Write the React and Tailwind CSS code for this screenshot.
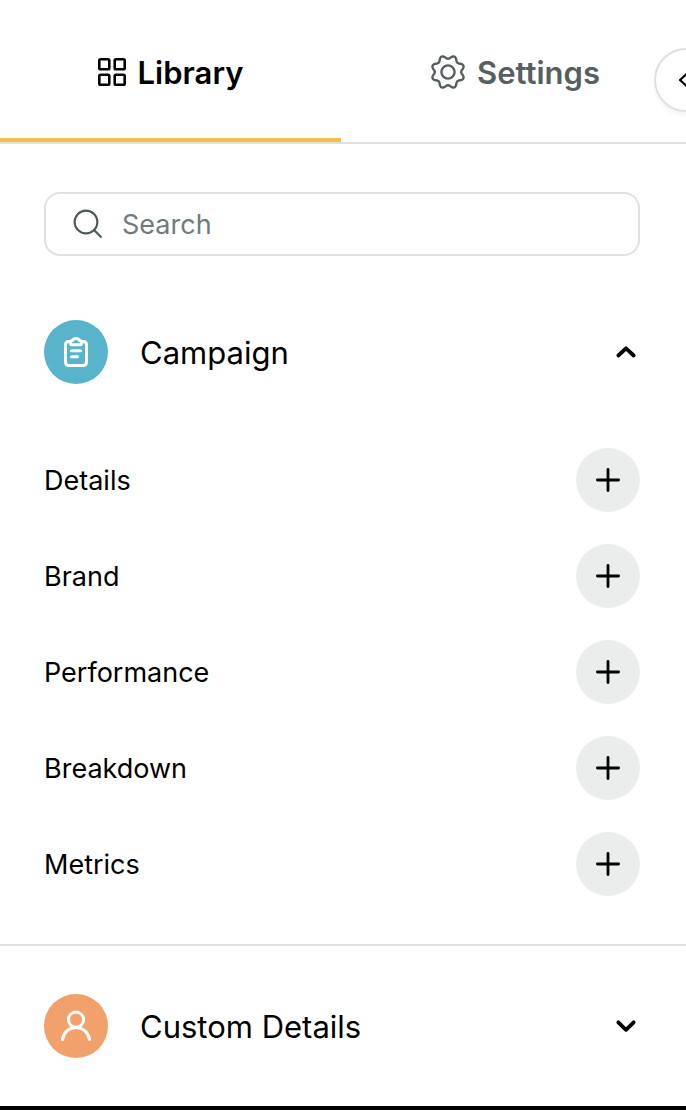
import React, { useState } from 'react';

// eight soft teeth around the centre of a 34x34 box
const gearOutline = Array.from({ length: 96 }, (_, i) => {
    const angle = (i / 96) * Math.PI * 2;
    const r = 14.9 - 1.8 * Math.cos(8 * angle);
    return `${(17 + r * Math.cos(angle)).toFixed(2)},${(17 + r * Math.sin(angle)).toFixed(2)}`;
}).join(' ');

const GridIcon = () => (
    <svg className="size-7" viewBox="0 0 28 28" fill="none" stroke="currentColor" strokeWidth="2.6" aria-hidden="true">
        <rect x="1.3" y="1.3" width="10" height="10" rx="1.3" />
        <rect x="16.7" y="1.3" width="10" height="10" rx="1.3" />
        <rect x="1.3" y="16.7" width="10" height="10" rx="1.3" />
        <rect x="16.7" y="16.7" width="10" height="10" rx="1.3" />
    </svg>
);

const GearIcon = () => (
    <svg className="size-[34px]" viewBox="0 0 34 34" fill="none" stroke="currentColor" strokeWidth="2.4" strokeLinejoin="round" aria-hidden="true">
        <circle cx="17" cy="17" r="6.6" />
        <polygon points={gearOutline} />
    </svg>
);

const SearchIcon = () => (
    <svg className="size-8 shrink-0 text-[#4d5859]" viewBox="0 0 32 32" fill="none" stroke="currentColor" strokeWidth="2.1" aria-hidden="true">
        <circle cx="14" cy="14" r="11.4" />
        <path d="M22 22L29.5 29.5" />
    </svg>
);

const ClipboardIcon = () => (
    <svg className="size-8" viewBox="0 0 32 32" fill="none" stroke="currentColor" strokeWidth="3" strokeLinecap="round" strokeLinejoin="round" aria-hidden="true">
        <path d="M10.5 5.5H9Q5.5 5.5 5.5 9V26Q5.5 29.5 9 29.5H23Q26.5 29.5 26.5 26V9Q26.5 5.5 23 5.5H21.5" />
        <path d="M10.5 7.5V6.5Q10.5 4.5 12.5 4.5Q13.5 2.5 16 2.5T19.5 4.5Q21.5 4.5 21.5 6.5V7.5Q21.5 8.8 20 8.8H12Q10.5 8.8 10.5 7.5Z" />
        <path d="M11.5 14.8H20.5M11.5 20.8H17.5" />
    </svg>
);

const PersonIcon = () => (
    <svg className="size-8" viewBox="0 0 32 32" fill="none" stroke="currentColor" strokeWidth="3" strokeLinecap="round" aria-hidden="true">
        <circle cx="16" cy="9.6" r="7.6" />
        <path d="M2.5 29.5C3.5 22.5 9 17.4 16 17.4S28.5 22.5 29.5 29.5" />
    </svg>
);

const PlusIcon = () => (
    <svg className="size-6" viewBox="0 0 24 24" fill="none" stroke="currentColor" strokeWidth="2.8" strokeLinecap="round" aria-hidden="true">
        <path d="M12 1.4V22.6M1.4 12H22.6" />
    </svg>
);

const Chevron = ({ open }) => (
    <svg className="w-7 h-5" viewBox="0 0 28 20" fill="none" stroke="currentColor" strokeWidth="3.8" strokeLinecap="round" strokeLinejoin="round" aria-hidden="true">
        <path d={open ? 'M6.3 13.5L14 6.3L21.7 13.5' : 'M6.3 6.3L14 13.8L21.7 6.3'} />
    </svg>
);

const sections = [
    {
        title: 'Campaign',
        color: 'bg-[#57b4cb]',
        Icon: ClipboardIcon,
        items: ['Details', 'Brand', 'Performance', 'Breakdown', 'Metrics'],
    },
    { title: 'Custom Details', color: 'bg-[#f2a16c]', Icon: PersonIcon, items: [] },
];

const Section = ({ title, color, Icon, items, open, onToggle }) => (
    <section className="border-b-2 border-[#dfe0e0] pl-11 pr-[46px] py-12 last:border-b-4 last:border-black">
        <button type="button" onClick={onToggle} aria-expanded={open} className="flex w-full items-center gap-8 text-left">
            <span className={`flex size-16 shrink-0 items-center justify-center rounded-full text-white ${color}`}>
                <Icon />
            </span>
            <span className="flex-1 pt-0.5 text-[31px] leading-10">{title}</span>
            <Chevron open={open} />
        </button>
        {open && items.length > 0 && (
            <ul className="mt-16 space-y-8">
                {items.map((item) => (
                    <li key={item} className="flex items-center justify-between">
                        <span className="pt-0.5 text-[27px] leading-9">{item}</span>
                        <button type="button" aria-label={`Add ${item}`} className="flex size-16 items-center justify-center rounded-full bg-[#ebeded] hover:bg-gray-300">
                            <PlusIcon />
                        </button>
                    </li>
                ))}
            </ul>
        )}
    </section>
);

const App = () => {
    const [tab, setTab] = useState('Library');
    const [query, setQuery] = useState('');
    const [openSection, setOpenSection] = useState('Campaign');

    const tabs = [
        { name: 'Library', Icon: GridIcon },
        { name: 'Settings', Icon: GearIcon },
    ];

    return (
        <div className="relative overflow-hidden bg-white font-['Inter',sans-serif] text-black">
            <header className="grid grid-cols-2 gap-1 border-b-2 border-[#dfe0e0]">
                {tabs.map(({ name, Icon }) => (
                    <button
                        key={name}
                        type="button"
                        onClick={() => setTab(name)}
                        className={`flex items-center justify-center gap-3 border-b-4 pt-[53px] pb-[47px] text-[31px] leading-9 font-semibold ${tab === name ? 'border-[#f7bf45] text-black' : 'border-transparent text-[#566061]'}`}
                    >
                        <Icon />
                        <span className="pt-0.5">{name}</span>
                    </button>
                ))}
            </header>
            <button type="button" aria-label="Collapse panel" className="absolute top-12 -right-8 flex size-16 items-center justify-center rounded-full border-2 border-[#dfe0e0] bg-white shadow-[0_4px_4px_rgba(0,0,0,0.04)]">
                <svg className="size-4" viewBox="0 0 16 16" fill="none" stroke="currentColor" strokeWidth="2.2" strokeLinejoin="round" aria-hidden="true">
                    <path d="M9 1.5L2 8L9 14.5" />
                </svg>
            </button>
            <div className="pl-11 pr-[46px] pt-12 pb-4">
                <label className="flex h-16 items-center gap-[18px] rounded-2xl border-2 border-[#dfe0e0] px-[26px]">
                    <SearchIcon />
                    <input
                        type="text"
                        value={query}
                        placeholder="Search"
                        aria-label="Search"
                        onChange={(e) => setQuery(e.target.value)}
                        className="w-full min-w-0 pt-0.5 text-[27px] leading-9 outline-none placeholder:text-[#727b7c]"
                    />
                </label>
            </div>
            <main>
                {sections.map((section) => (
                    <Section
                        key={section.title}
                        {...section}
                        open={openSection === section.title}
                        onToggle={() => setOpenSection(openSection === section.title ? '' : section.title)}
                    />
                ))}
            </main>
        </div>
    );
};

export default App;
